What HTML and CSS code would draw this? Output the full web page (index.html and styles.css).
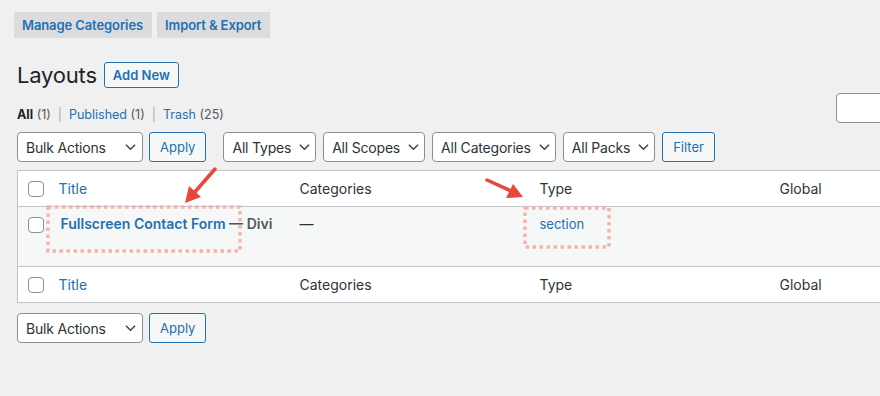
FILE: index.html
```html
<!DOCTYPE html>
<html lang="en">
<head>
  <meta charset="UTF-8" />
  <title>Layouts</title>
  <link rel="stylesheet" href="styles.css">
</head>
<body>
  <div class="wrap">
    <nav class="tabs">
      <a class="tab" href="#">Manage Categories</a>
      <a class="tab" href="#">Import &amp; Export</a>
    </nav>

    <div class="title-row">
      <h1>Layouts</h1>
      <a class="add-new" href="#">Add New</a>
    </div>

    <div class="views-row">
      <ul class="subsubsub">
        <li><b>All</b> <span class="count">(1)</span><span class="sep">|</span></li>
        <li><a href="#">Published</a> <span class="count">(1)</span><span class="sep">|</span></li>
        <li><a href="#">Trash</a> <span class="count">(25)</span></li>
      </ul>
      <div class="search-box"></div>
    </div>

    <div class="tablenav">
      <div class="select w-bulk">Bulk Actions <svg viewBox="0 0 12 8"><path d="M1 1.5l5 5 5-5"/></svg></div>
      <button class="btn">Apply</button>
      <div class="filters">
        <div class="select">All Types <svg viewBox="0 0 12 8"><path d="M1 1.5l5 5 5-5"/></svg></div>
        <div class="select">All Scopes <svg viewBox="0 0 12 8"><path d="M1 1.5l5 5 5-5"/></svg></div>
        <div class="select">All Categories <svg viewBox="0 0 12 8"><path d="M1 1.5l5 5 5-5"/></svg></div>
        <div class="select">All Packs <svg viewBox="0 0 12 8"><path d="M1 1.5l5 5 5-5"/></svg></div>
        <button class="btn">Filter</button>
      </div>
    </div>

    <table class="list">
      <colgroup>
        <col class="c-check"><col class="c-col"><col class="c-col"><col class="c-col"><col class="c-col">
      </colgroup>
      <thead>
        <tr>
          <td class="check"><span class="cb"></span></td>
          <th><a href="#">Title</a></th>
          <th>Categories</th>
          <th>Type</th>
          <th>Global</th>
        </tr>
      </thead>
      <tbody>
        <tr class="row">
          <td class="check"><span class="cb"></span></td>
          <td><a class="row-title" href="#">Fullscreen Contact Form</a><b class="state"> — Divi</b></td>
          <td class="dash">—</td>
          <td><a class="type-link" href="#">section</a></td>
          <td></td>
        </tr>
      </tbody>
      <tfoot>
        <tr>
          <td class="check"><span class="cb"></span></td>
          <th><a href="#">Title</a></th>
          <th>Categories</th>
          <th>Type</th>
          <th>Global</th>
        </tr>
      </tfoot>
    </table>

    <div class="tablenav bottom">
      <div class="select w-bulk">Bulk Actions <svg viewBox="0 0 12 8"><path d="M1 1.5l5 5 5-5"/></svg></div>
      <button class="btn">Apply</button>
    </div>
  </div>

  <!-- annotation layer drawn over the screenshot -->
  <svg class="notes" width="880" height="396" viewBox="0 0 880 396">
    <rect x="48" y="207" width="192" height="44" class="dots"/>
    <rect x="525" y="208" width="84" height="39" class="dots"/>
    <line x1="215" y1="169" x2="194" y2="193" class="arrow"/>
    <polygon points="185,203 189,186 201,197" fill="#e8473a"/>
    <line x1="487" y1="180" x2="511" y2="191" class="arrow"/>
    <polygon points="523,197 506,198 513,184" fill="#e8473a"/>
  </svg>
</body>
</html>
```

FILE: styles.css
```css
body {
  margin: 0;
  background: #f0f0f1;
  color: #2c3338;
  font-family: Inter, "Noto Sans", sans-serif;
  font-size: 13px;
  overflow: hidden;
  width: 880px;
  height: 396px;
}
a {
  color: #2271b1;
  text-decoration: none;
}
.wrap {
  padding: 12px 0 0 17px;
  position: relative;
}
.tabs {
  display: flex;
  gap: 5px;
  margin-left: -3px;
}
.tab {
  background: #dcdcde;
  font-weight: 600;
  font-size: 13px;
  letter-spacing: -0.1px;
  height: 26px;
  line-height: 26px;
  padding: 0 9px 0 8px;
}
.title-row {
  display: flex;
  align-items: center;
  gap: 7px;
  margin-top: 24px;
  height: 26px;
}
h1 {
  margin: 0;
  font-size: 22px;
  font-weight: 400;
  color: #1d2327;
  letter-spacing: -0.2px;
}
.add-new {
  border: 1px solid #2271b1;
  border-radius: 3px;
  background: #f6f7f7;
  font-weight: 600;
  height: 24px;
  line-height: 24px;
  padding: 0 8px;
}
.views-row {
  display: flex;
  justify-content: space-between;
  align-items: flex-start;
  margin-top: 5px;
  height: 39px;
}
.subsubsub {
  list-style: none;
  margin: 14px 0 0;
  padding: 0;
  display: flex;
  font-size: 12.5px;
  color: #50575e;
}
.subsubsub b {
  color: #1d2327;
}
.sep {
  color: #a7aaad;
  margin: 0 7px;
}
.search-box {
  width: 60px;
  height: 28px;
  margin-right: -18px;
  background: #fff;
  border: 1px solid #8c8f94;
  border-radius: 4px;
}
.tablenav {
  display: flex;
  align-items: center;
  height: 30px;
  gap: 6px;
}
.filters {
  display: flex;
  gap: 7px;
  margin-left: 11px;
}
.select {
  display: flex;
  align-items: center;
  gap: 8px;
  height: 28px;
  padding: 0 5px 0 8px;
  background: #fff;
  border: 1px solid #8c8f94;
  border-radius: 4px;
  font-size: 14px;
  letter-spacing: -0.2px;
  color: #2c3338;
  white-space: nowrap;
}
.select svg {
  width: 11px;
  height: 8px;
  fill: none;
  stroke: #3c434a;
  stroke-width: 1.6;
}
.w-bulk {
  width: 110px;
  justify-content: space-between;
  padding-right: 6px;
}
.btn {
  height: 30px;
  padding: 0 10px;
  background: #f6f7f7;
  border: 1px solid #2271b1;
  border-radius: 3px;
  color: #2271b1;
  font-family: inherit;
  font-size: 13px;
}
.list {
  margin-top: 8px;
  width: 992px;
  table-layout: fixed;
  border-collapse: collapse;
  background: #fff;
  border: 1px solid #c3c4c7;
  font-size: 14px;
}
.c-check {
  width: 32px;
}
.c-col {
  width: 240px;
}
.list th,
.list td {
  text-align: left;
  font-weight: 400;
  padding: 0 10px;
  color: #2c3338;
  white-space: nowrap;
}
.list th:nth-child(2) {
  padding-left: 9px;
}
.list .check {
  padding: 0 0 0 10px;
}
.list thead tr,
.list tfoot tr {
  height: 36px;
}
.list thead tr {
  border-bottom: 1px solid #c3c4c7;
}
.list tfoot tr {
  border-top: 1px solid #c3c4c7;
}
.row {
  background: #f6f7f7;
  height: 60px;
}
.row td {
  vertical-align: top;
  padding-top: 8px;
}
.row .check {
  padding-top: 10px;
}
.cb {
  display: block;
  width: 14px;
  height: 14px;
  border: 1px solid #8c8f94;
  border-radius: 4px;
  background: #fff;
}
.row-title {
  font-weight: 600;
  margin-left: 1px;
}
.state {
  font-weight: 600;
  color: #50575e;
}
.type-link {
  font-size: 13px;
}
.bottom {
  margin-top: 10px;
}
.notes {
  position: absolute;
  left: 0;
  top: 0;
  pointer-events: none;
}
.dots {
  fill: none;
  stroke: #f6b3ad;
  stroke-width: 3.5;
  stroke-dasharray: 3.5 3.5;
}
.arrow {
  stroke: #e8473a;
  stroke-width: 3.5;
  stroke-linecap: round;
}
```
